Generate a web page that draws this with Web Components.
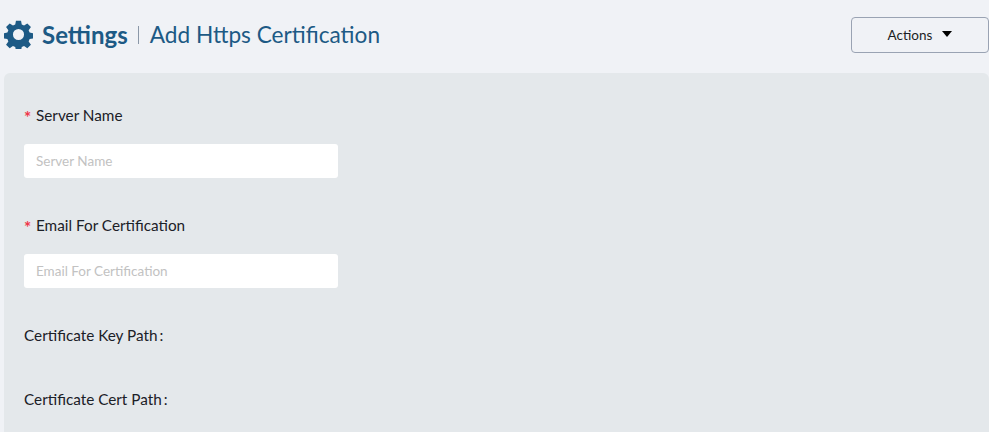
<!DOCTYPE html>
<html><head><meta charset="utf-8"><style>
html,body{margin:0;padding:0;height:432px;overflow:hidden;background:#f0f2f6;}
body{font-family:"Lato","Noto Sans",sans-serif;}
</style></head><body>
<settings-page>
<page-header slot="header"></page-header>
<form-field label="Server Name" required></form-field>
<form-field label="Email For Certification" required></form-field>
<info-row label="Certificate Key Path"></info-row>
<info-row label="Certificate Cert Path"></info-row>
</settings-page>
<script>
class Base extends HTMLElement{
  render(html){this.attachShadow({mode:'open'}).innerHTML=html;}
}
customElements.define('settings-page',class extends Base{connectedCallback(){this.render(`<style>
:host{display:flex;flex-direction:column;height:432px;overflow:hidden}
.panel{flex:1;min-height:0;margin-left:4px;background:#e4e8eb;border-radius:6px 6px 0 0;padding:27px 20px 0;box-sizing:border-box;display:flex;flex-direction:column}
</style><slot name="header"></slot><div class="panel"><slot></slot></div>`)}});
customElements.define('page-header',class extends Base{connectedCallback(){this.render(`<style>
:host{display:flex;flex:none;align-items:center;height:73px;box-sizing:border-box;padding:0 0 3px 4px;color:#1d5a85}
svg{width:29px;height:29px;display:block;flex:none;margin-bottom:1px}
.s{font-size:24px;font-weight:700;margin:0 0 2px 9px}
.d{width:1px;height:18px;background:#8b98a8;margin:0 11px 0 10px}
.t{font-size:22.65px;margin-bottom:2px}
.sp{flex:1}
button{all:unset;box-sizing:border-box;width:138px;height:36px;border:1px solid #9aa3b3;border-radius:4px;display:flex;align-items:center;justify-content:center;font-size:13.5px;color:#1b1e24;gap:10px}
.c{width:0;height:0;border:5.5px solid transparent;border-top:6px solid #000;border-bottom:0;margin-top:-3px}
</style>
<svg viewBox="0 0 24 24" aria-hidden="true"><path fill="#1d5a85" fill-rule="evenodd" d="M9.9.6h4.2l.6 3.2 1.9.8 2.7-1.8 3 3-1.9 2.7.8 1.9 3.2.6v4.2l-3.2.6-.8 1.9 1.9 2.7-3 3-2.7-1.9-1.9.8-.6 3.2H9.9l-.6-3.2-1.9-.8-2.7 1.9-3-3 1.9-2.7-.8-1.9-3.2-.6v-4.2l3.2-.6.8-1.9L1.7 5.8l3-3 2.7 1.8 1.9-.8zM12 7.4a4.6 4.6 0 1 0 0 9.2 4.6 4.6 0 0 0 0-9.2z"/></svg>
<span class="s">Settings</span><span class="d"></span><span class="t">Add Https Certification</span><span class="sp"></span>
<button>Actions<span class="c"></span></button>`)}});
customElements.define('form-field',class extends Base{connectedCallback(){const l=this.getAttribute('label');this.render(`<style>
:host{display:block;height:110px;flex:none;color:#1b2027}
.l{font-size:15.3px;line-height:30px;height:30px;display:flex;align-items:center}
.r{color:#f0354a;width:12px;font-size:17px;font-weight:700;line-height:17px;height:12px;flex:none}
input{display:block;box-sizing:border-box;width:314px;height:34px;margin-top:14px;border:0;border-radius:3px;background:#fff;padding:0 12px;font:13.5px "Lato",sans-serif;outline:none}
input::placeholder{color:#c2c2c2;opacity:1}
</style><div class="l"><span class="r">*</span><span>${l}</span></div><input placeholder="${l}">`)}});
customElements.define('info-row',class extends Base{connectedCallback(){this.render(`<style>
:host{display:block;flex:none;height:64px;color:#1b2027;font-size:15.3px;line-height:30px}
</style><div>${this.getAttribute('label')}<span style="margin-left:2px">:</span></div>`)}});
</script></body></html>
